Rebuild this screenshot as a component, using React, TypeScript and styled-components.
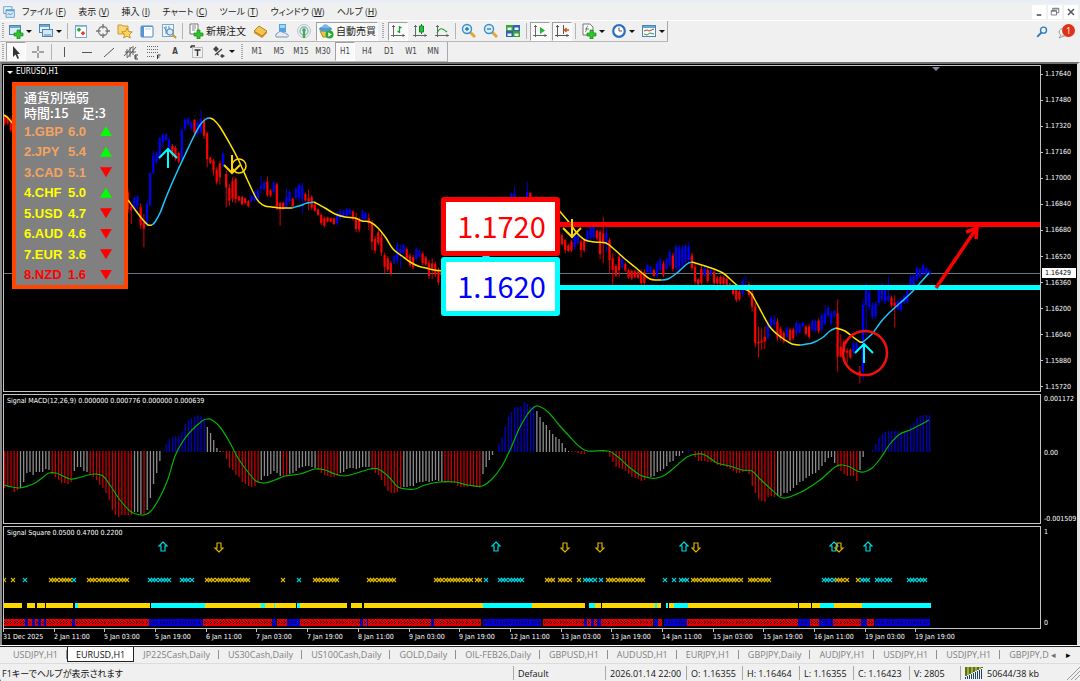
import React from "react";
import styled, { createGlobalStyle, css } from "styled-components";

/* ---------- theme ---------- */

const UI_FONT = `"Open Sans", "Noto Sans CJK JP", sans-serif`;
const CHART_FONT = `"DejaVu Sans Condensed", "DejaVu Sans", sans-serif`;
const RED = "#ff0000";
const BLUE = "#0000f4";
const CYAN = "#00ffff";
const YELLOW = "#ffd700";
const MA_UP = "#19c8ff";
const MA_DOWN = "#ffe400";

const GlobalStyle = createGlobalStyle`
  * { box-sizing: border-box; }
  html, body { margin: 0; background: #1d5a86; }
  body { font-family: ${UI_FONT}; font-size: 9px; color: #222; }
  button { font: inherit; color: inherit; }
`;

const Window = styled.div`
  min-height: 100vh;
  display: flex;
  flex-direction: column;
  background: #f0f0f0;
  border-bottom-left-radius: 4px;
  overflow: hidden;
`;

/* ---------- menu bar ---------- */

const TitleEdge = styled.div`
  height: 3px;
  background: #e8edf7;
`;

const MenuBar = styled.nav`
  height: 18px;
  display: flex;
  align-items: center;
  padding: 0 2px 0 3px;
  border-bottom: 1px solid #fff;
`;

const MenuItems = styled.div`
  display: flex;
  flex: 1;
  gap: 12px;
  padding-left: 7px;
`;

const MenuButton = styled.button`
  border: 0;
  padding: 0;
  background: none;
  font-family: "Noto Sans CJK JP", sans-serif;
  font-size: 9px;
  line-height: 16px;
  font-feature-settings: "palt";
  white-space: pre;
`;

const WindowButtons = styled.div`
  display: flex;
  gap: 2px;
`;

const WindowButton = styled.button`
  width: 14px;
  height: 14px;
  padding: 0;
  border: 0;
  background: #fff;
  display: grid;
  place-items: center;
`;

/* ---------- toolbars ---------- */

const ToolRow = styled.div<{ $h: number }>`
  height: ${(p) => p.$h}px;
  display: flex;
  justify-content: space-between;
`;

const Toolbar = styled.div`
  display: flex;
  align-items: center;
  gap: 2px;
  padding: 0 0 0 2px;
  border-right: 1px solid #a8a8a8;
  border-bottom: 1px solid #b8b8b8;
`;

const DrawingToolbar = styled(Toolbar)`
  padding-right: 4px;
`;

const Handle = styled.span`
  width: 2px;
  height: 16px;
  background: repeating-linear-gradient(#a8a8a8 0 1px, #f0f0f0 1px 2px);
`;

const MidHandle = styled(Handle)`
  margin: 0 2px;
`;

const Separator = styled.span`
  width: 1px;
  height: 16px;
  margin: 0 1px;
  background: #b4b4b4;
`;

const pressedLook = css`
  background: #f9f9f9;
  border-color: #a0a0a0 #fff #fff #a0a0a0;
`;

const ToolButton = styled.button<{ $pressed?: boolean; $kind?: "drop" | "label" }>`
  height: 19px;
  width: ${(p) => (p.$kind === "drop" ? "28px" : p.$kind === "label" ? "auto" : "20px")};
  padding: 0 1px;
  border: 1px solid transparent;
  background: none;
  display: flex;
  align-items: center;
  justify-content: ${(p) => (p.$kind ? "flex-start" : "center")};
  gap: 2px;
  white-space: nowrap;
  ${(p) => p.$kind === "label" && `font-size: 10px; line-height: 16px;`}
  ${(p) => p.$pressed && pressedLook}
`;

const PeriodButton = styled(ToolButton)`
  padding: 0;
  font-family: ${CHART_FONT};
  font-size: 8px;
  color: #444;
`;

const Caret = styled.span`
  border: 3px solid transparent;
  border-top-color: #111;
  border-bottom: 0;
`;

const ToolRight = styled.div`
  display: flex;
  align-items: center;
  gap: 7px;
  padding-right: 5px;
`;

const AlertButton = styled.button`
  position: relative;
  width: 20px;
  height: 18px;
  padding: 0;
  border: 0;
  background: none;
`;

const AlertBadge = styled.span`
  position: absolute;
  right: 0;
  top: 1px;
  width: 13px;
  height: 13px;
  border-radius: 50%;
  background: #e03218;
  color: #fff;
  font-size: 9px;
  line-height: 13px;
  text-align: center;
`;

/* ---------- chart frame ---------- */

const ChartFrame = styled.main`
  flex: 1;
  display: flex;
  flex-direction: column;
  gap: 2px;
  padding: 1px 0 0 1px;
  background: #000;
  border: solid;
  border-width: 2px 3px 0 2px;
  border-color: #707070 #e4e4e4 #e4e4e4 #8a8a8a;
  color: #fff;
  font-family: ${CHART_FONT};
  font-size: 7px;
  line-height: 10px;
`;

const Panel = styled.section<{ $h: number; $grow?: boolean }>`
  display: flex;
  ${(p) => (p.$grow ? `flex: 1 0 ${p.$h}px;` : `flex: none; height: ${p.$h}px;`)}
`;

const Plot = styled.div`
  position: relative;
  flex: 1;
  min-width: 0;
  border: 1px solid #c4c4c4;
  overflow: hidden;
`;

const PlotSvg = styled.svg`
  display: block;
  width: 100%;
  height: 100%;
`;

const PlotTitle = styled.div<{ $big?: boolean }>`
  position: absolute;
  left: 3px;
  top: 1px;
  display: flex;
  align-items: center;
  gap: 3px;
  font-size: ${(p) => (p.$big ? 8 : 7)}px;
  white-space: nowrap;
`;

const TitleCaret = styled(Caret)`
  border-top-color: #fff;
`;

const Axis = styled.div<{ $top: number; $bottom: number }>`
  position: relative;
  width: 36px;
  display: flex;
  flex-direction: column;
  justify-content: space-between;
  padding: ${(p) => p.$top}px 0 ${(p) => p.$bottom}px;
  white-space: nowrap;
`;

const AxisLabel = styled.span<{ $tick?: boolean }>`
  display: flex;
  align-items: center;
  gap: 2px;
  ${(p) => (p.$tick ? `&::before { content: ""; width: 2px; height: 1px; background: #c4c4c4; }` : `padding-left: 3px;`)}
`;

const AxisRange = styled.span<{ $span: number }>`
  flex: ${(p) => p.$span} 0 0;
`;

const PriceTag = styled.span`
  position: absolute;
  left: 1px;
  right: 1px;
  top: 203px;
  padding-left: 3px;
  background: #fff;
  color: #000;
`;

const TimeAxis = styled.svg`
  display: block;
  flex: none;
  width: 100%;
  height: 17px;
  margin-top: -2px;
`;

/* ---------- strength panel and price boxes ---------- */

const StrengthBox = styled.aside`
  position: absolute;
  left: 8px;
  top: 16px;
  width: 116px;
  height: 207px;
  padding: 3px 8px 0;
  border: 4px solid #ff4500;
  background: #808080;
  display: flex;
  flex-direction: column;
`;

const StrengthHead = styled.p`
  margin: 0;
  font-family: "Noto Sans CJK JP", sans-serif;
  font-size: 13px;
  font-weight: 500;
  line-height: 16px;
  white-space: pre;
`;

const StrengthList = styled.ul`
  flex: 1;
  margin: 0;
  padding: 0;
  list-style: none;
  display: flex;
  flex-direction: column;
`;

const StrengthRow = styled.li<{ $color: string }>`
  flex: 1;
  display: grid;
  grid-template-columns: 44px 32px 12px;
  align-items: center;
  font: bold 13px "Liberation Sans", sans-serif;
  color: ${(p) => p.$color};
`;

const Trend = styled.i<{ $up: boolean }>`
  width: 12px;
  height: 10px;
  background: ${(p) => (p.$up ? "#00ff00" : "#ff0000")};
  clip-path: ${(p) => (p.$up ? "polygon(50% 0, 100% 100%, 0 100%)" : "polygon(0 0, 100% 0, 50% 100%)")};
`;

const LevelBox = styled.div<{ $top: number; $edge: string; $ink: string }>`
  position: absolute;
  left: 437px;
  top: ${(p) => p.$top}px;
  width: 119px;
  height: 59px;
  padding-left: 2px;
  border: 5px solid ${(p) => p.$edge};
  border-radius: 3px;
  background: #fff;
  color: ${(p) => p.$ink};
  font-family: "Noto Sans CJK JP", sans-serif;
  font-size: 29px;
  line-height: 46px;
  text-align: center;
`;

/* ---------- tabs and status ---------- */

const TabBar = styled.div`
  height: 17px;
  display: flex;
  border-top: 1px solid #222;
  box-shadow: 0 -1px #fff;
`;

const Tabs = styled.div`
  flex: 1;
  min-width: 0;
  display: flex;
  align-items: flex-start;
  overflow: hidden;
  padding-left: 4px;
`;

const Tab = styled.button<{ $active?: boolean }>`
  flex: none;
  height: 15px;
  padding: 0 9px;
  border: 0;
  background: ${(p) => (p.$active ? "#fff" : "none")};
  color: ${(p) => (p.$active ? "#111" : "#808080")};
  line-height: 13px;
  ${(p) =>
    p.$active
      ? `border: 1px solid #222; border-top: 0; padding: 0 8px;`
      : `background: linear-gradient(#909090, #909090) right 3px / 1px 9px no-repeat;`}
`;

const TabScroll = styled.div`
  width: 31px;
  display: flex;
  align-items: center;
  gap: 7px;
`;

const ScrollButton = styled.button<{ $dim?: boolean }>`
  border: 0;
  padding: 0;
  background: none;
  font-size: 9px;
  line-height: 14px;
  width: 8px;
  color: ${(p) => (p.$dim ? "#707070" : "#000")};
`;

const StatusBar = styled.footer`
  height: 19px;
  display: grid;
  grid-template-columns: 1fr 92px 81px 56px 57px 54px 56px 51px 120px;
  align-items: center;
  border-top: 1px solid #dcdcdc;
  color: #111;
`;

const StatusCell = styled.span<{ $first?: boolean }>`
  display: flex;
  align-items: center;
  gap: 3px;
  height: 14px;
  padding-left: ${(p) => (p.$first ? 2 : 4)}px;
  border-left: ${(p) => (p.$first ? 0 : 1)}px solid #a8a8a8;
  font-feature-settings: ${(p) => (p.$first ? '"palt"' : "normal")};
  white-space: nowrap;
`;

const Grip = styled.svg`
  margin-left: auto;
`;

/* ---------- data ---------- */

const PITCH = 3.168;

type Bar = [string, number, number, number?, number?];

/* Candles: colour, high, low and optionally body top and bottom, in thirds of a pixel from base. */
const candleRuns: { start: number; base: number; bars: Bar[] }[] = [
  { start: 0, base: -6, bars: [["r", 150, 185], ["r", 155, 182], ["r", 160, 205]] },
  {
    start: 39,
    base: -6,
    bars: [
      ["r", 375, 447], ["r", 425, 480, 428, 438], ["b", 395, 442], ["b", 393, 445, 398, 425], ["r", 418, 495],
      ["r", 450, 550, 475, 495], ["b", 410, 485, 420, 480], ["b", 325, 425, 328, 424], ["b", 258, 330, 275, 328],
      ["b", 262, 300], ["b", 220, 290, 222, 280], ["b", 208, 250, 212, 235], ["b", 208, 232], ["b", 222, 262],
      ["r", 240, 280], ["r", 245, 290], ["r", 262, 298], ["b", 190, 290, 198, 285], ["b", 162, 200], ["b", 160, 185],
      ["b", 172, 198], ["r", 165, 215, 168, 205], ["b", 168, 215], ["b", 138, 210, 165, 205], ["r", 160, 225],
      ["r", 203, 310, 208, 285], ["r", 278, 300], ["r", 285, 335, 290, 320], ["r", 310, 362], ["r", 290, 362, 298, 340],
      ["b", 262, 310], ["r", 320, 430, 330, 370], ["r", 360, 425, 372, 410], ["r", 340, 415], ["r", 340, 418, 345, 405],
      ["r", 395, 412], ["r", 395, 425], ["r", 400, 420], ["r", 408, 430], ["b", 393, 415], ["b", 380, 412],
    ],
  },
  {
    start: 80,
    base: 282,
    bars: [
      ["b", 85, 125], ["b", 48, 100, 78, 86], ["b", 62, 92], ["r", 50, 110, 65, 105], ["r", 88, 110], ["b", 62, 102],
      ["r", 68, 150, 73, 145], ["r", 125, 197, 130, 148], ["r", 125, 150], ["b", 85, 145, 112, 142], ["b", 90, 130],
      ["r", 112, 145], ["b", 80, 120], ["b", 70, 125, 75, 112], ["b", 68, 162, 78, 118], ["r", 98, 125], ["r", 88, 150, 115, 125],
      ["r", 105, 150], ["r", 130, 156], ["r", 145, 168], ["r", 160, 195], ["r", 170, 202], ["r", 170, 187], ["r", 172, 187],
      ["r", 172, 195], ["b", 155, 197], ["b", 148, 180], ["b", 150, 175], ["b", 143, 172], ["b", 145, 167], ["r", 150, 182],
      ["r", 158, 217, 175, 207], ["r", 172, 215], ["b", 148, 187], ["b", 155, 182], ["r", 160, 210, 175, 190],
      ["r", 180, 270, 188, 245], ["r", 228, 280], ["r", 210, 255], ["r", 220, 287], ["r", 278, 340, 285, 320],
      ["r", 288, 336], ["r", 303, 346], ["b", 285, 312], ["b", 245, 312], ["b", 255, 325, 268, 280], ["b", 250, 282],
      ["r", 262, 300], ["r", 280, 322], ["r", 285, 328], ["b", 262, 302], ["b", 270, 292], ["r", 275, 315], ["r", 288, 318],
      ["r", 300, 357], ["r", 295, 357, 310, 325], ["r", 305, 350], ["r", 323, 375], ["r", 328, 352],
    ],
  },
  { start: 160, base: 282, bars: [["b", 98, 120], ["b", 80, 120, 100, 120]] },
  { start: 165, base: 282, bars: [["b", 65, 120, 96, 120], ["r", 95, 120]] },
  {
    start: 176,
    base: 372,
    bars: [
      ["r", 130, 168], ["r", 148, 190, 150, 180], ["r", 162, 187], ["r", 150, 187], ["b", 120, 180], ["b", 128, 165],
      ["r", 148, 202, 155, 180], ["r", 145, 187], ["b", 118, 160], ["b", 103, 150], ["b", 100, 150], ["r", 118, 150],
      ["r", 118, 207, 125, 192], ["r", 80, 220, 130, 160], ["b", 112, 187, 128, 165], ["r", 143, 250, 150, 210],
      ["r", 190, 285, 205, 240], ["r", 222, 262], ["r", 193, 262, 200, 240], ["b", 200, 237], ["r", 218, 245],
      ["r", 235, 267], ["r", 238, 270], ["r", 240, 265], ["r", 242, 267], ["r", 238, 287], ["r", 238, 287], ["b", 220, 250],
      ["b", 228, 252], ["r", 236, 262], ["b", 213, 264], ["b", 203, 247], ["r", 213, 262], ["b", 203, 242],
      ["b", 178, 232], ["r", 188, 245], ["b", 163, 250, 170, 235], ["b", 166, 248, 172, 232], ["b", 165, 237],
      ["b", 160, 227, 168, 215], ["b", 156, 222, 168, 210], ["r", 188, 242], ["r", 222, 284], ["r", 265, 287],
      ["r", 228, 287], ["b", 228, 262], ["r", 233, 280], ["b", 236, 257], ["r", 238, 287], ["r", 258, 302, 265, 280],
      ["r", 256, 287], ["r", 258, 287], ["r", 263, 290], ["r", 278, 297], ["r", 283, 317], ["r", 288, 337],
      ["r", 300, 332], ["b", 265, 320], ["b", 258, 302, 285, 300], ["r", 275, 322], ["r", 288, 365, 310, 350],
      ["r", 338, 472, 350, 460], ["r", 410, 502, 455, 460], ["r", 415, 480, 452, 458], ["r", 410, 477, 440, 455],
      ["b", 390, 452], ["b", 378, 412], ["b", 375, 412, 388, 405], ["r", 385, 452], ["r", 410, 452], ["r", 423, 460],
      ["b", 410, 445], ["r", 413, 457], ["r", 413, 450], ["b", 392, 437], ["b", 398, 432], ["b", 395, 412],
      ["r", 405, 437], ["r", 403, 447], ["b", 388, 425], ["b", 388, 427], ["r", 385, 430], ["b", 368, 427],
      ["b", 345, 405, 370, 402], ["b", 348, 382], ["b", 363, 407], ["b", 360, 382], ["r", 328, 545, 370, 500],
      ["r", 433, 502, 470, 500], ["r", 448, 492], ["r", 475, 520, 482, 488], ["r", 475, 507], ["b", 455, 492],
      ["b", 455, 487], ["r", 528, 580, 545, 552], ["b", 332, 570, 345, 545], ["b", 278, 440, 300, 345],
      ["b", 298, 360], ["b", 338, 388], ["b", 333, 387], ["b", 293, 347], ["b", 278, 337], ["b", 293, 342],
      ["b", 260, 337, 320, 332], ["r", 318, 352], ["r", 316, 412, 338, 348], ["b", 328, 362], ["b", 323, 367],
      ["b", 313, 342], ["b", 296, 342], ["b", 253, 307], ["b", 253, 292], ["b", 228, 275], ["b", 233, 267],
      ["b", 220, 255], ["b", 230, 257], ["b", 240, 257],
    ],
  },
];

type Pt = [number, number];

const maLines: { color: string; pts: Pt[] }[] = [
  { color: MA_DOWN, pts: [[4, 115], [8, 118], [13, 124]] },
  { color: MA_DOWN, pts: [[128, 200], [136, 211], [143, 220], [148, 225], [152, 225]] },
  { color: MA_UP, pts: [[152, 225], [155, 222], [160, 213], [167, 195], [177, 172], [185, 155], [193, 138], [200, 125], [206, 119], [210, 118]] },
  { color: MA_DOWN, pts: [[210, 118], [214, 120], [220, 127], [230, 144], [238, 159], [247, 179], [255, 196], [259, 202], [265, 206], [272, 207], [280, 208], [292, 208]] },
  { color: MA_UP, pts: [[292, 208], [302, 205], [307, 203], [314, 202]] },
  { color: MA_DOWN, pts: [[314, 202], [325, 208], [335, 214], [345, 217], [355, 218], [362, 221], [370, 222], [378, 228], [386, 238], [393, 249], [402, 256], [410, 262], [418, 266], [426, 268], [434, 270], [444, 271]] },
  { color: MA_DOWN, pts: [[556, 207], [568, 221], [577, 233], [585, 240], [595, 242], [606, 243], [615, 250], [625, 259], [635, 267], [642, 273], [650, 279], [657, 280], [661, 280]] },
  { color: MA_UP, pts: [[661, 280], [668, 279], [677, 273], [687, 264], [692, 262]] },
  { color: MA_DOWN, pts: [[692, 262], [705, 266], [714, 269], [723, 273], [730, 279], [738, 286], [750, 292], [755, 300], [762, 313], [770, 327], [777, 334], [785, 340], [792, 344], [800, 345]] },
  { color: MA_UP, pts: [[800, 345], [812, 343], [822, 338], [830, 331], [836, 328]] },
  { color: MA_DOWN, pts: [[836, 328], [845, 331], [853, 337], [860, 342], [863, 342]] },
  { color: MA_UP, pts: [[863, 342], [872, 334], [880, 323], [888, 314], [900, 303], [910, 294], [920, 283], [929, 273]] },
];

/* MACD histogram: bar end per column, in thirds of a pixel; baseline is 183. */
const macdRuns: [string, number[]][] = [
  ["r", [293, 290, 290, 305, 300]],
  ["g", [293, 275, 250, 247, 255, 245, 247, 245, 238, 240]],
  ["r", [252, 260, 270, 278, 280, 283, 275]],
  ["g", [243, 232, 232, 242, 245]],
  ["r", [255, 260, 270, 285, 295, 308, 330, 360, 375, 380, 376, 376, 376, 376]],
  ["g", [365, 365, 372]],
  ["r", [375]],
  ["g", [360, 325, 283, 250, 212]],
  ["b", [181, 158, 145, 137, 135, 135, 122, 100, 87, 80, 78, 72, 75, 82]],
  ["g", [107, 125, 147, 172, 180]],
  ["r", [187, 207, 235, 240, 255, 262, 275, 283, 287, 290, 287, 280]],
  ["g", [270, 258, 258, 252, 243, 250, 258]],
  ["r", [262, 258]],
  ["g", [252, 250, 243, 233, 230, 228, 228, 232, 235]],
  ["r", [240, 248, 255, 257, 260, 262, 258]],
  ["g", [250, 245, 237, 233, 235, 238, 235, 232, 230, 230]],
  ["r", [238, 248, 255, 270, 287, 303, 308, 310, 305, 295]],
  ["g", [292, 290, 288, 287, 280, 277, 275, 273, 275, 272, 270, 272, 275]],
  ["r", [278, 275, 278, 280, 287, 290, 292, 290, 288, 290, 292, 295]],
  ["g", [252, 232, 210, 195, 183]],
  ["b", [158, 140, 107, 78, 63, 48, 48, 45, 33, 40, 45, 47]],
  ["g", [60, 78, 92, 102, 118, 128, 137, 145, 157, 170, 180]],
  ["r", [186, 186, 188, 192, 192, 186]],
  ["b", [180, 179, 177, 180]],
  ["r", [186, 187, 200, 217, 232, 233, 238, 243, 253, 260, 265, 267, 272, 270, 265]],
  ["g", [262, 257, 245, 243, 238, 228, 215, 213, 198, 197, 190]],
  ["b", [180, 177, 183]],
  ["r", [200, 212, 213, 213, 215, 215, 220, 225, 227, 228, 232, 237, 243, 248, 250, 245, 243, 253, 287, 310, 328, 333, 335, 322, 317, 322]],
  ["g", [318, 317, 310, 310, 303, 295, 285, 277, 273, 265, 257, 252, 250, 240, 228, 215, 205, 200, 220]],
  ["r", [232, 243, 253, 258, 258, 258, 272]],
  ["g", [240, 200]],
  ["b", [183, 183, 177, 160, 140, 128, 122, 120, 120, 120, 120, 122, 122, 122, 105, 95, 82, 74, 72, 72, 72]],
];

const signalPts: Pt[] = [
  [4, 485], [12, 487], [20, 488], [28, 486], [35, 483], [42, 478], [49, 473], [56, 473], [63, 476], [70, 479], [78, 478],
  [88, 475], [96, 474], [103, 476], [110, 485], [120, 500], [130, 511], [136, 514], [144, 515], [151, 511], [160, 497],
  [168, 479], [175, 456], [183, 441], [192, 430], [202, 421], [207, 419], [212, 420], [220, 427], [229, 441], [238, 458],
  [248, 472], [256, 481], [265, 483], [275, 480], [285, 476], [300, 474], [315, 469], [325, 470], [335, 474], [345, 476],
  [357, 473], [370, 469], [378, 469], [388, 476], [398, 487], [407, 489], [415, 489], [425, 485], [440, 482], [455, 482],
  [468, 485], [482, 486], [492, 479], [502, 466], [510, 450], [519, 429], [527, 415], [533, 408], [538, 406], [548, 412],
  [560, 426], [570, 437], [580, 447], [588, 451], [608, 451], [618, 457], [628, 466], [640, 475], [650, 478], [657, 478],
  [665, 475], [675, 467], [687, 457], [697, 454], [705, 455], [717, 463], [730, 466], [742, 470], [752, 471], [760, 479],
  [772, 490], [780, 497], [785, 498], [792, 496], [805, 490], [820, 480], [835, 467], [842, 465], [850, 467], [857, 471],
  [864, 472], [872, 468], [880, 459], [890, 444], [900, 434], [910, 430], [920, 425], [929, 420],
];

type Span = [string, number, number];

const crossSpans: Span[] = [
  ["y", 4, 4], ["y", 13, 16], ["c", 25, 25], ["y", 51, 72], ["c", 74, 77], ["y", 89, 128], ["c", 150, 172],
  ["c", 182, 192], ["y", 207, 249], ["y", 283, 283], ["c", 299, 299], ["y", 315, 338], ["y", 369, 396], ["y", 436, 471],
  ["y", 477, 481], ["c", 486, 486], ["c", 500, 525], ["y", 547, 554], ["y", 560, 570], ["y", 579, 582], ["c", 585, 595],
  ["c", 601, 601], ["y", 608, 643], ["c", 665, 668], ["c", 674, 674], ["c", 681, 688], ["y", 693, 741], ["y", 750, 770],
  ["c", 824, 834], ["y", 837, 849], ["y", 858, 858], ["c", 862, 869], ["c", 877, 890], ["c", 909, 928],
];

const trendSpans: Span[] = [
  ["y", 4, 22], ["y", 27, 35], ["y", 37, 45], ["y", 46, 73], ["c", 75, 78], ["y", 78, 150], ["c", 151, 205],
  ["y", 205, 261], ["c", 261, 265], ["y", 265, 274], ["c", 274, 275], ["y", 275, 296], ["c", 297, 300], ["y", 300, 347],
  ["y", 351, 362], ["y", 364, 483], ["c", 483, 532], ["y", 532, 585], ["c", 589, 595], ["y", 595, 601], ["y", 602, 655],
  ["c", 655, 657], ["y", 657, 661], ["c", 666, 668], ["y", 669, 674], ["c", 674, 688], ["y", 688, 798], ["y", 799, 811],
  ["y", 812, 820], ["c", 820, 834], ["y", 834, 862], ["c", 862, 931],
];

const squareSpans: Span[] = [
  ["r", 4, 22], ["m", 23, 46], ["r", 47, 68], ["m", 70, 78], ["r", 79, 146], ["b", 150, 202], ["r", 204, 268], ["m", 270, 276],
  ["r", 278, 285], ["b", 288, 299], ["r", 301, 357], ["m", 358, 368], ["r", 369, 428], ["m", 429, 436], ["r", 437, 480],
  ["b", 484, 541], ["r", 544, 580], ["m", 582, 600], ["r", 602, 652], ["b", 655, 657], ["r", 659, 662], ["b", 665, 686],
  ["r", 688, 796], ["b", 799, 809], ["r", 811, 818], ["b", 820, 831], ["r", 834, 860], ["b", 862, 866], ["r", 868, 873], ["b", 876, 929],
];

const signalArrows: [number, boolean][] = [
  [163, true], [219, false], [496, true], [565, false], [600, false], [684, true], [696, false], [834, true], [839, false], [868, true],
];

const prices = ["1.17640", "1.17480", "1.17320", "1.17160", "1.17000", "1.16840", "1.16680", "1.16520", "1.16360", "1.16200", "1.16040", "1.15880", "1.15720"];

const times = [
  "31 Dec 2025", "2 Jan 11:00", "5 Jan 03:00", "5 Jan 19:00", "6 Jan 11:00", "7 Jan 03:00", "7 Jan 19:00", "8 Jan 11:00",
  "9 Jan 03:00", "9 Jan 19:00", "12 Jan 11:00", "13 Jan 03:00", "13 Jan 19:00", "14 Jan 11:00", "15 Jan 03:00",
  "15 Jan 19:00", "16 Jan 11:00", "19 Jan 03:00", "19 Jan 19:00",
];

const strengths: [string, string, boolean, string][] = [
  ["1.GBP", "6.0", true, "#f4a460"],
  ["2.JPY", "5.4", true, "#f4a460"],
  ["3.CAD", "5.1", false, "#f4a460"],
  ["4.CHF", "5.0", true, "#ffff00"],
  ["5.USD", "4.7", false, "#ffff00"],
  ["6.AUD", "4.6", false, "#ffff00"],
  ["7.EUR", "3.6", false, "#ffff00"],
  ["8.NZD", "1.6", false, "#ff0000"],
];

const menus: [string, string][] = [
  ["ファイル", "F"], ["表示", "V"], ["挿入", "I"], ["チャート", "C"], ["ツール", "T"], ["ウィンドウ", "W"], ["ヘルプ", "H"],
];

const tabs = [
  "USDJPY,H1", "EURUSD,H1", "JP225Cash,Daily", "US30Cash,Daily", "US100Cash,Daily", "GOLD,Daily", "OIL-FEB26,Daily",
  "GBPUSD,H1", "AUDUSD,H1", "EURJPY,H1", "GBPJPY,Daily", "AUDJPY,H1", "USDJPY,H1", "USDJPY,H1", "GBPJPY,Daily",
];

/* ---------- drawing helpers ---------- */

/* Catmull-Rom spline through the points. */
const smooth = (p: Pt[]) => {
  let d = `M${p[0][0]} ${p[0][1]}`;
  for (let i = 0; i < p.length - 1; i++) {
    const a = p[i - 1] ?? p[i];
    const b = p[i];
    const c = p[i + 1];
    const e = p[i + 2] ?? c;
    d += `C${b[0] + (c[0] - a[0]) / 6} ${b[1] + (c[1] - a[1]) / 6} ${c[0] - (e[0] - b[0]) / 6} ${c[1] - (e[1] - b[1]) / 6} ${c[0]} ${c[1]}`;
  }
  return d;
};

const Candles = () => (
  <g>
    {candleRuns.flatMap(({ start, base, bars }) =>
      bars.map(([c, hi, lo, top, bottom], k) => {
        const i = start + k;
        const x = i * PITCH;
        const inset = (lo - hi) * 0.15;
        const y = (v: number) => (base + v) / 3;
        const t = y(top ?? hi + inset);
        const b = y(bottom ?? lo - inset);
        return (
          <g key={i} fill={c === "r" ? RED : BLUE}>
            <rect x={x} y={y(hi)} width={1} height={y(lo) - y(hi)} opacity={0.85} />
            <rect x={x - 0.7} y={t} width={2.2} height={Math.max(1, b - t)} />
          </g>
        );
      })
    )}
  </g>
);

const Histogram = () => {
  const tones: Record<string, string> = { r: "#c80000", g: "#8c8c8c", b: "#0000c8" };
  const cols = macdRuns.flatMap(([c, vals]) => vals.map((v) => [c, v] as [string, number]));
  return (
    <g>
      {cols.map(([c, v], i) => {
        const h = Math.round(Math.abs(v - 183) / 3);
        return <rect key={i} x={i * PITCH} y={v > 183 ? 56 : 57 - h} width={1.3} height={h} fill={tones[c]} />;
      })}
    </g>
  );
};

const spread = (from: number, to: number) => {
  const xs: number[] = [];
  for (let x = from; x <= to; x += PITCH) xs.push(Math.round(x));
  return xs;
};

const tone = (c: string) => (c === "y" ? "#e0b800" : "#00d0d8");

const SignalRows = () => (
  <g transform="translate(-4 -527)">
    {signalArrows.map(([x, up]) => (
      <path
        key={x}
        d="M0 -5L4 -1H2V4H-2V-1H-4Z"
        transform={`translate(${x} 547)${up ? "" : " rotate(180)"}`}
        fill="none"
        stroke={up ? "#00d8e0" : "#d8b000"}
        strokeWidth="1.200"
      />
    ))}
    {crossSpans.flatMap(([c, a, b]) =>
      spread(a, b).map((x) => <path key={`${c}${x}`} d={`M${x - 2} 578l4 4m0 -4l-4 4`} stroke={tone(c)} strokeWidth="1.1" />)
    )}
    {trendSpans.map(([c, a, b]) => (
      <rect key={a} x={a} y={603} width={b - a} height={5} fill={c === "y" ? YELLOW : CYAN} shapeRendering="crispEdges" />
    ))}
    <g shapeRendering="crispEdges">
      {squareSpans.flatMap(([c, a, b]) =>
        spread(a, b).map((x, k) => {
          const ink = c === "r" || (c === "m" && k % 2 === 0) ? "#e00000" : "#0000d8";
          return (
            <g key={`${c}${x}`}>
              <rect x={x - 1} y={619} width={4} height={7} fill={ink} />
              <rect x={x} y={621} width={1} height={1} fill="#200010" />
              <rect x={x + 1} y={622} width={1} height={1} fill="#200010" />
              <rect x={x} y={623} width={1} height={1} fill="#200010" />
            </g>
          );
        })
      )}
    </g>
  </g>
);

/* ---------- icons ---------- */

const Icon = ({ children, size = 16 }: { children: React.ReactNode; size?: number }) => (
  <svg width={size} height={size} viewBox="0 0 16 16" fill="none" aria-hidden="true">
    {children}
  </svg>
);

const Plus = () => <path d="M9 7h3v3h3v3h-3v3H9v-3H6v-3h3z" fill="#2fc52f" stroke="#128a12" strokeWidth=".7" />;

const Icons = {
  app: (
    <Icon size={12}>
      <rect x="1" y="1" width="11" height="9" fill="#e8f3fb" stroke="#4a8fc4" />
      <rect x="4" y="5" width="11" height="10" fill="#d6eaf8" stroke="#4a8fc4" />
      <path d="M4 5h11v2H4z" fill="#5ba3d8" />
      <path d="M6 12l2-2 2 2 3-3" stroke="#2f72a8" />
    </Icon>
  ),
  newChart: <Icon><rect x="1.500" y="2.500" width="11" height="9" fill="#dcecf8" stroke="#4c86b0" /><path d="M2 3h10v2H2z" fill="#6ea9d2" /><Plus /></Icon>,
  profiles: <Icon><rect x="1.500" y="1.500" width="10" height="8" fill="#e4f0fa" stroke="#4c86b0" /><path d="M2 2h9v2H2z" fill="#6ea9d2" /><rect x="4.500" y="6.500" width="10" height="7" fill="#d4e7f6" stroke="#4c86b0" /><path d="M6 12h7" stroke="#4c86b0" /></Icon>,
  market: <Icon><rect x="2.500" y="2.500" width="11" height="12" fill="#fff" stroke="#7aa7cc" /><path d="M3 3h10v1H3z" fill="#9cc2e2" /><path d="M6 4.500l2.300 2.300L6 9.100 3.700 6.800z" fill="#1fa83a" /><path d="M10 8l2.300 2.300-2.300 2.300-2.300-2.300z" fill="#e23b26" /></Icon>,
  target: <Icon><circle cx="8" cy="8" r="4.500" stroke="#777" strokeWidth="1.300" /><path d="M8 1v4.500M8 10.500V15M1 8h4.500M10.500 8H15" stroke="#777" strokeWidth="1.400" /></Icon>,
  favorites: <Icon><path d="M1 2h4l1 1h5v8H1z" fill="#f6d879" stroke="#c99a2c" /><path d="M10 5l1.500 3.500 3.800.4-2.900 2.500.9 3.600L10 13.200l-3.300 1.800.9-3.600-2.900-2.500L8.500 8.500z" fill="#ffd65a" stroke="#b98714" strokeWidth=".8" /></Icon>,
  terminal: <Icon><rect x="2" y="3" width="12" height="11" rx="1" fill="#fff" stroke="#4b87bd" /><path d="M2 3h3v11H2z" fill="#5596cf" /><path d="M2 3h12v1H2z" fill="#5596cf" /><path d="M6 6h6" stroke="#b9d3ea" /></Icon>,
  tester: <Icon><rect x="1.500" y="1.500" width="11" height="12" fill="#eef5fb" stroke="#7aa7cc" /><path d="M3 4l3 5M5 3v8M8 3v5" stroke="#5b88ae" /><circle cx="9" cy="9" r="3.200" fill="#d6ecfa" stroke="#4d84ad" /><path d="M11.500 11.500L15 15" stroke="#c79a35" strokeWidth="2" /></Icon>,
  order: <Icon><path d="M2 1h8v10H2z" fill="#fff" stroke="#777" /><path d="M4 3h4M4 5h4M4 7h3" stroke="#888" /><Plus /></Icon>,
  book: <Icon><path d="M2 8l5-5 8 5-5 5z" fill="#f3c550" stroke="#b9831b" /><path d="M2 8v2l8 5v-2zM10 15l5-5V8l-5 5z" fill="#c98f22" /></Icon>,
  cloudUser: <Icon><path d="M5 1h7v8H5z" fill="#4fa4e4" /><path d="M6 2h5v3H6z" fill="#a6d4f5" /><path d="M2 14c-1-3 1-4 2-4 1-2 4-2 5 0 2-1 3 0 3 1 3 0 3 3 1 3z" fill="#e6edf5" stroke="#7d94ae" /></Icon>,
  signal: <Icon><circle cx="8" cy="8" r="6.500" stroke="#bdc5cb" /><circle cx="8" cy="8" r="4" stroke="#7fb4d8" strokeWidth="1.300" /><path d="M8 7.500L8 15" stroke="#45ac3f" strokeWidth="2.400" /><circle cx="8" cy="7" r="1.800" fill="#45ac3f" /></Icon>,
  auto: <Icon><path d="M2 8h11l-2 6H5z" fill="#efc14a" stroke="#b98b1e" /><ellipse cx="7.500" cy="6" rx="6.500" ry="2.800" fill="#4f9bd4" /><path d="M4 5c0-5 7-5 7 0z" fill="#78b9e6" /><circle cx="11.500" cy="11.500" r="4" fill="#26ab2d" /><path d="M10.300 9.300l3.500 2.200-3.500 2.200z" fill="#fff" /></Icon>,
  bars: <Icon><path d="M3.500 2v12M1 12.500h14M2 3.500h3M13 11v3" stroke="#666" /><path d="M9.500 3v7M7.500 8.500h2M9.500 4.500h2" stroke="#18a030" strokeWidth="1.300" /></Icon>,
  candles: <Icon><path d="M3.500 2v12M1 12.500h14M2 3.500h3M13 11v3" stroke="#666" /><path d="M9.500 1v10" stroke="#128a24" /><path d="M7.500 3h4v6h-4z" fill="#22c13a" stroke="#128a24" /></Icon>,
  line: <Icon><path d="M3.500 2v12M1 12.500h14M2 3.500h3M13 11v3" stroke="#666" /><path d="M3 10c3-6 5-5 10-1" stroke="#18a030" strokeWidth="1.200" /></Icon>,
  zoomIn: <Icon><path d="M9.500 9.500L14 14" stroke="#dca93a" strokeWidth="3" /><circle cx="6" cy="6" r="4.500" fill="#d8eefb" stroke="#3c8ec8" strokeWidth="1.400" /><path d="M6 4v4M4 6h4" stroke="#2a78b4" strokeWidth="1.300" /></Icon>,
  zoomOut: <Icon><path d="M9.500 9.500L14 14" stroke="#dca93a" strokeWidth="3" /><circle cx="6" cy="6" r="4.500" fill="#d8eefb" stroke="#3c8ec8" strokeWidth="1.400" /><path d="M4 6h4" stroke="#2a78b4" strokeWidth="1.300" /></Icon>,
  tile: <Icon><path d="M1 2h7v6H1zM8 8h7v6H8z" fill="#3aa52e" /><path d="M8 2h7v6H8zM1 8h7v6H1z" fill="#2d5fc4" /><path d="M2.500 4.500h4V7h-4zM9.500 4.500h4V7h-4zM2.500 10.500h4V13h-4zM9.500 10.500h4V13h-4z" fill="#eef6ee" /></Icon>,
  scroll: <Icon><path d="M3.500 2v12M1 12.500h14M2 3.500h3M13 11v3" stroke="#666" /><path d="M8 4l5 3.500L8 11z" fill="#22b53a" /></Icon>,
  shift: <Icon><path d="M3.500 2v12M1 12.500h14M2 3.500h3M13 11v3M9.500 2v9" stroke="#555" /><path d="M15 7h-4M12.500 5L10.500 7l2 2" stroke="#d0521c" strokeWidth="1.400" /></Icon>,
  indicator: <Icon><path d="M2 1h7l3 3v8H2z" fill="#fff" stroke="#777" /><path d="M7 3C5 3 6 9 4 9M4 6h4" stroke="#777" /><Plus /></Icon>,
  clock: <Icon><circle cx="8" cy="8" r="5.800" fill="#fff" stroke="#2c6fc0" strokeWidth="2.200" /><path d="M8 4.500V8h3" stroke="#555" /></Icon>,
  template: <Icon><rect x="1.500" y="2.500" width="13" height="11" fill="#f4f9fd" stroke="#4c86b0" /><path d="M2 3h12v2H2z" fill="#68a6d4" /><path d="M3 8l3-1 2 1 5-2" stroke="#a5522c" /><path d="M3 11l3 1 3-2 4 1" stroke="#3a9a3a" /></Icon>,
  cursor: <Icon><path d="M5 2v11l2.500-2.500L9.500 15l1.500-.8L9.200 10H12z" fill="#333" /></Icon>,
  cross: <Icon><path d="M8 2v5M8 9v5M2 8h5M9 8h5" stroke="#555" /></Icon>,
  vline: <Icon><path d="M7.500 3v10" stroke="#555" /></Icon>,
  hline: <Icon><path d="M3 8.500h10" stroke="#555" /></Icon>,
  trend: <Icon><path d="M3 13L13 4" stroke="#555" /></Icon>,
  channel: <Icon><path d="M1 12l8-9M4 14l9-11M2 8h11M4 5v8M7 3v10M10 2v9" stroke="#555" strokeWidth=".9" /><path d="M15 11h-3v4h3M12 13h2" stroke="#333" /></Icon>,
  fibo: <Icon><path d="M2 2.500h12M2 5.500h12M2 8.500h12M2 12.500h8" stroke="#666" strokeDasharray="1 1" /><path d="M12.500 15v-4h3M12.500 13h2" stroke="#333" /></Icon>,
  textBox: <Icon><rect x="3.500" y="3.500" width="10" height="10" stroke="#888" strokeDasharray="1 1" /><path d="M5.500 6h6M8.500 6v6M2 2h4M2 2v2" stroke="#333" strokeWidth="1.400" /></Icon>,
  arrows: <Icon><path d="M5 2l3 3-3 3-3-3zM11 10l3 2-3 2-2-2z" fill="#444" /><path d="M4 11l7-6M5 9l3 2" stroke="#444" strokeWidth="1.300" /></Icon>,
  search: <Icon size={12}><circle cx="10" cy="5.500" r="4" stroke="#2f78b7" strokeWidth="1.800" fill="#eef7fd" /><path d="M7 9l-5.500 5.500" stroke="#2f78b7" strokeWidth="2.400" /></Icon>,
};

const Tool = ({ name, icon, pressed, drop, label }: { name: string; icon: React.ReactNode; pressed?: boolean; drop?: boolean; label?: string }) => (
  <ToolButton type="button" aria-label={name} $pressed={pressed} $kind={drop ? "drop" : label ? "label" : undefined}>
    {icon}
    {label}
    {drop && <Caret />}
  </ToolButton>
);

/* ---------- page ---------- */

const MainChart = () => (
  <Plot>
    <PlotSvg role="img" aria-label="EURUSD H1">
      <line x1="0" x2="100%" y1="207.500" y2="207.500" stroke="#6a7580" />
      <Candles />
      <g transform="translate(-4 -66)" fill="none">
        {maLines.map((l, i) => (
          <path key={i} d={smooth(l.pts)} stroke={l.color} strokeWidth="1.500" />
        ))}
        <path d="M932 67h8l-4 4z" fill="#8088a0" />
        <path d="M168 168V149M159 158l9-9 9 9" stroke={CYAN} strokeWidth="2" />
        <path d="M232 155v18M224 165l8 8 8-8" stroke={YELLOW} strokeWidth="2" />
        <circle cx="239" cy="166" r="7" stroke={YELLOW} strokeWidth="1.500" />
        <ellipse cx="486" cy="258" rx="4" ry="3" fill="#40d8ff" />
      </g>
      <line x1="550" x2="100%" y1="158.500" y2="158.500" stroke={RED} strokeWidth="5" />
      <line x1="550" x2="100%" y1="221.500" y2="221.500" stroke={CYAN} strokeWidth="5" />
      <g transform="translate(-4 -66)" fill="none">
        <path d="M572 219v19M563 228l9 9 9-9" stroke={YELLOW} strokeWidth="2" />
        <path d="M864 363v-18M855 353l9-9 9 9" stroke={CYAN} strokeWidth="2" />
        <circle cx="865" cy="353" r="22" stroke="#f01010" strokeWidth="2.500" />
        <path d="M936 288L976 229" stroke={RED} strokeWidth="3.500" />
        <path d="M966 232l11-4-1 11" stroke={RED} strokeWidth="3.500" />
      </g>
    </PlotSvg>
    <PlotTitle $big>
      <TitleCaret />
      EURUSD,H1
    </PlotTitle>
    <StrengthBox>
      <StrengthHead>通貨別強弱</StrengthHead>
      <StrengthHead>時間:15　足:3</StrengthHead>
      <StrengthList>
        {strengths.map(([code, value, up, color]) => (
          <StrengthRow key={code} $color={color}>
            <span>{code}</span>
            <span>{value}</span>
            <Trend $up={up} />
          </StrengthRow>
        ))}
      </StrengthList>
    </StrengthBox>
    <LevelBox $top={131} $edge={RED} $ink="#ff0000">1.1720</LevelBox>
    <LevelBox $top={191} $edge={CYAN} $ink="#0000ff">1.1620</LevelBox>
  </Plot>
);

export default function App() {
  return (
    <Window>
      <GlobalStyle />
      <TitleEdge />
      <MenuBar>
        {Icons.app}
        <MenuItems>
          {menus.map(([name, key]) => (
            <MenuButton type="button" key={name}>
              {name} (<u>{key}</u>)
            </MenuButton>
          ))}
        </MenuItems>
        <WindowButtons>
          <WindowButton type="button" aria-label="Minimize"><Icon size={12}><path d="M5 12h6" stroke="#445" strokeWidth="2" /></Icon></WindowButton>
          <WindowButton type="button" aria-label="Restore"><Icon size={12}><path d="M5 6V3h8v6h-3M3 6h7v6H3zM3 7h7M5 4h8" stroke="#667" strokeWidth="1.100" /></Icon></WindowButton>
          <WindowButton type="button" aria-label="Close"><Icon size={12}><path d="M4 4l8 8M12 4l-8 8" stroke="#556" strokeWidth="2" /></Icon></WindowButton>
        </WindowButtons>
      </MenuBar>

      <ToolRow $h={21}>
        <Toolbar>
          <Handle />
          <Tool name="New chart" icon={Icons.newChart} drop />
          <Tool name="Profiles" icon={Icons.profiles} drop />
          <Separator />
          <Tool name="Market watch" icon={Icons.market} />
          <Tool name="Data window" icon={Icons.target} />
          <Tool name="Navigator" icon={Icons.favorites} />
          <Tool name="Terminal" icon={Icons.terminal} />
          <Tool name="Strategy tester" icon={Icons.tester} />
          <Separator />
          <Tool name="新規注文" icon={Icons.order} label="新規注文" />
          <Tool name="MetaEditor" icon={Icons.book} />
          <Tool name="Community" icon={Icons.cloudUser} />
          <Tool name="Signals" icon={Icons.signal} />
          <Tool name="自動売買" icon={Icons.auto} label="自動売買" pressed />
          <MidHandle />
          <Tool name="Bar chart" icon={Icons.bars} pressed />
          <Tool name="Candlesticks" icon={Icons.candles} />
          <Tool name="Line chart" icon={Icons.line} />
          <Separator />
          <Tool name="Zoom in" icon={Icons.zoomIn} />
          <Tool name="Zoom out" icon={Icons.zoomOut} />
          <Tool name="Tile windows" icon={Icons.tile} />
          <Separator />
          <Tool name="Auto scroll" icon={Icons.scroll} pressed />
          <Tool name="Chart shift" icon={Icons.shift} pressed />
          <Separator />
          <Tool name="Indicators" icon={Icons.indicator} drop />
          <Tool name="Periods" icon={Icons.clock} drop />
          <Tool name="Templates" icon={Icons.template} drop />
        </Toolbar>
        <ToolRight>
          {Icons.search}
          <AlertButton type="button" aria-label="Messages">
            <Icon><ellipse cx="8" cy="9" rx="6" ry="4" fill="#f6f6f6" stroke="#999" /><path d="M4 12l-2 3 5-2" fill="#f6f6f6" stroke="#999" /></Icon>
            <AlertBadge>1</AlertBadge>
          </AlertButton>
        </ToolRight>
      </ToolRow>

      <ToolRow $h={20}>
        <DrawingToolbar>
          <Handle />
          <Tool name="Cursor" icon={Icons.cursor} pressed />
          <Tool name="Crosshair" icon={Icons.cross} />
          <Separator />
          <Tool name="Vertical line" icon={Icons.vline} />
          <Tool name="Horizontal line" icon={Icons.hline} />
          <Tool name="Trendline" icon={Icons.trend} />
          <Tool name="Channel" icon={Icons.channel} />
          <Tool name="Fibonacci" icon={Icons.fibo} />
          <PeriodButton type="button"><b>A</b></PeriodButton>
          <Tool name="Text label" icon={Icons.textBox} />
          <Tool name="Arrows" icon={Icons.arrows} drop />
          <MidHandle />
          {["M1", "M5", "M15", "M30", "H1", "H4", "D1", "W1", "MN"].map((p) => (
            <PeriodButton type="button" key={p} $pressed={p === "H1"}>{p}</PeriodButton>
          ))}
        </DrawingToolbar>
      </ToolRow>

      <ChartFrame>
        <Panel $h={327} $grow>
          <MainChart />
          <Axis $top={4} $bottom={0}>
            {prices.map((p) => (
              <AxisLabel key={p} $tick>{p}</AxisLabel>
            ))}
            <PriceTag>1.16429</PriceTag>
          </Axis>
        </Panel>
        <Panel $h={130}>
          <Plot>
            <PlotSvg role="img" aria-label="Signal MACD">
              <Histogram />
              <g transform="translate(-4 -395)">
                <path d={smooth(signalPts)} fill="none" stroke="#00b400" strokeWidth="1.200" />
              </g>
            </PlotSvg>
            <PlotTitle>Signal MACD(12,26,9) 0.000000 0.000776 0.000000 0.000639</PlotTitle>
          </Plot>
          <Axis $top={0} $bottom={0}>
            <AxisLabel>0.001172</AxisLabel>
            <AxisRange $span={1172} />
            <AxisLabel>0.00</AxisLabel>
            <AxisRange $span={1509} />
            <AxisLabel>-0.001509</AxisLabel>
          </Axis>
        </Panel>
        <Panel $h={103}>
          <Plot>
            <PlotSvg role="img" aria-label="Signal Square">
              <SignalRows />
            </PlotSvg>
            <PlotTitle>Signal Square 0.0500 0.4700 0.2200</PlotTitle>
          </Plot>
          <Axis $top={1} $bottom={1}>
            <AxisLabel>1</AxisLabel>
            <AxisLabel>0</AxisLabel>
          </Axis>
        </Panel>
        <TimeAxis>
          {times.map((t, i) => (
            <g key={t} transform={`translate(${Math.round(i * 16 * PITCH)} 0)`}>
              <rect width="1" height="3" fill="#c4c4c4" />
              <text y="10" fill="#fff">{t}</text>
            </g>
          ))}
        </TimeAxis>
      </ChartFrame>

      <TabBar>
        <Tabs>
          {tabs.map((t, i) => (
            <Tab type="button" key={i} $active={i === 1}>{t}</Tab>
          ))}
        </Tabs>
        <TabScroll>
          <ScrollButton type="button" aria-label="Previous tabs" $dim>◂</ScrollButton>
          <ScrollButton type="button" aria-label="Next tabs">▸</ScrollButton>
        </TabScroll>
      </TabBar>

      <StatusBar>
        <StatusCell $first>F1キーでヘルプが表示されます</StatusCell>
        <StatusCell>Default</StatusCell>
        <StatusCell>2026.01.14 22:00</StatusCell>
        <StatusCell>O: 1.16355</StatusCell>
        <StatusCell>H: 1.16464</StatusCell>
        <StatusCell>L: 1.16355</StatusCell>
        <StatusCell>C: 1.16423</StatusCell>
        <StatusCell>V: 2805</StatusCell>
        <StatusCell>
          <svg width="19" height="12" aria-hidden="true" shapeRendering="crispEdges">
            {[0, 2, 4, 6, 8, 10, 12, 14, 16].map((x, i) => (
              <g key={x}>
                <rect x={x} y="0" width="2" height={9 - i} fill={i % 2 ? "#a0ac40" : "#5f7018"} />
                <rect x={x} y={10 - i} width="1" height={2 + i} fill="#1b4668" />
              </g>
            ))}
          </svg>
          50644/38 kb
          <Grip width="14" height="14" aria-hidden="true">
            <path d="M14 1L1 14M14 5L5 14M14 9L9 14" stroke="#999" />
          </Grip>
        </StatusCell>
      </StatusBar>
    </Window>
  );
}
